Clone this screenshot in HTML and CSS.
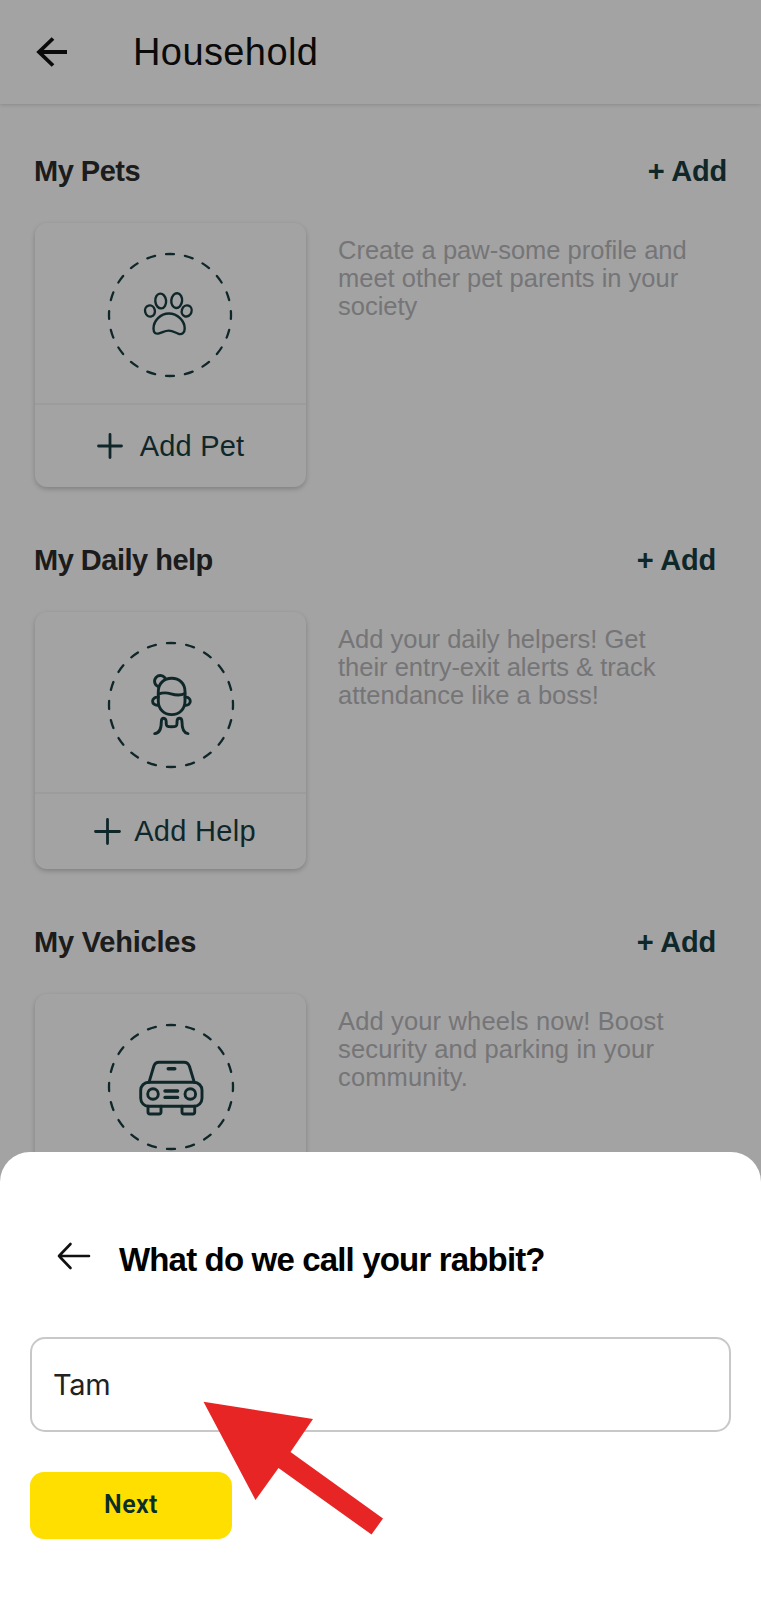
FILE: index.html
```html
<!DOCTYPE html>
<html lang="en">
<head>
    <meta charset="UTF-8">
    <meta name="viewport" content="width=device-width, initial-scale=1.0">
    <title>Household</title>
    <link rel="stylesheet" href="styles.css">
</head>
<body>

    <header>
        <svg class="back-icon" width="32" height="32" viewBox="0 0 32 32">
            <path d="M31 16H3M17 2.5L3 16L17 29.5"/>
        </svg>
        <h1>Household</h1>
    </header>

    <main>
        <section class="pets">
            <div class="section-head">
                <h2>My Pets</h2>
                <a class="add-link">+ Add</a>
            </div>
            <div class="section-body">
                <div class="card">
                    <div class="card-icon">
                        <svg width="128" height="128" viewBox="-64 -64 128 128">
                            <circle class="ring" r="61" pathLength="380"/>
                            <ellipse cx="-9.3" cy="-14" rx="5.4" ry="7.4" transform="rotate(-6 -9.3 -14)"/>
                            <ellipse cx="6.7" cy="-14.4" rx="5.4" ry="7.4" transform="rotate(6 6.7 -14.4)"/>
                            <ellipse cx="-20" cy="-4" rx="4.9" ry="5.6" transform="rotate(-15 -20 -4)"/>
                            <ellipse cx="16.7" cy="-4" rx="4.9" ry="5.6" transform="rotate(20 16.7 -4)"/>
                            <path d="M-1.2 -1.5C-9.5 -1.5 -16.5 6 -16.5 13.5C-16.5 17.5 -14.5 19.3 -11 18.4C-7.5 17.5 -5 15.6 -1.2 15.6C2.6 15.6 5 17.5 8.6 18.8C12 20 14.7 17.5 14.7 13.5C14.7 6 7.5 -1.5 -1.2 -1.5Z"/>
                        </svg>
                    </div>
                    <div class="card-action">
                        <svg width="26" height="26" viewBox="0 0 26 26"><path d="M13 1.5V24.5M1.5 13H24.5"/></svg>
                        <span>Add Pet</span>
                    </div>
                </div>
                <p>Create a paw-some profile and<br>meet other pet parents in your<br>society</p>
            </div>
        </section>

        <section class="help">
            <div class="section-head">
                <h2>My Daily help</h2>
                <a class="add-link">+ Add</a>
            </div>
            <div class="section-body">
                <div class="card">
                    <div class="card-icon">
                        <svg class="bold" width="128" height="128" viewBox="-64 -64 128 128">
                            <circle class="ring" r="62" pathLength="380"/>
                            <path d="M-13 -18.5A5.7 5.7 0 1 1 -5.5 -26"/>
                            <path d="M-12.7 -13.5C-12.7 -21.5 -7 -26.7 0.7 -26.7C8.3 -26.7 14 -21.5 14 -13.5V-4C14 4.5 8 9.6 0.7 9.6C-6.7 9.6 -12.7 4.5 -12.7 -4Z"/>
                            <path d="M-12.7 -10.8C-8 -12.8 -4.5 -12.5 0 -11.2C4.5 -9.8 9 -9 14 -11.5"/>
                            <path d="M-12.7 -7.8C-20.3 -8.5 -20.3 1 -12.7 0.3M14 -7.8C21 -8.5 21 1 14 0.3"/>
                            <path d="M-16.3 28.6C-11 28.2 -9.7 22 -9.7 17C-9.7 12 -4.8 12 -4.8 17V18.5C-4.8 21.5 -3.5 21.8 0.5 21.8C4.5 21.8 6 21.5 6 18.5V17C6 12 11 12 11 17C11 22.5 12.5 28.2 17 28.6"/>
                        </svg>
                    </div>
                    <div class="card-action">
                        <svg width="27" height="27" viewBox="0 0 27 27"><path d="M13.5 1.5V25.5M1.5 13.5H25.5"/></svg>
                        <span>Add Help</span>
                    </div>
                </div>
                <p>Add your daily helpers! Get<br>their entry-exit alerts &amp; track<br>attendance like a boss!</p>
            </div>
        </section>

        <section class="vehicles">
            <div class="section-head">
                <h2>My Vehicles</h2>
                <a class="add-link">+ Add</a>
            </div>
            <div class="section-body">
                <div class="card">
                    <div class="card-icon">
                        <svg class="bold" width="128" height="128" viewBox="-64 -64 128 128">
                            <circle class="ring" r="62" pathLength="380"/>
                            <rect x="-30.3" y="-4.7" width="61.3" height="24" rx="8"/>
                            <path d="M-22 -4.7L-17.3 -20.5Q-16 -24.7 -12 -24.7H13Q17 -24.7 18.5 -20.5L23.3 -4.7"/>
                            <circle cx="-18" cy="7" r="5.3"/>
                            <circle cx="19.3" cy="7" r="5.3"/>
                            <path class="thick" d="M-2.8 -18.3H3.8M-6 4H6.6M-6 10.4H6.6"/>
                            <path d="M-23 19.3V25Q-23 27 -21 27H-12Q-10 27 -10 25V19.3M11 19.3V25Q11 27 13 27H21.7Q23.7 27 23.7 25V19.3"/>
                        </svg>
                    </div>
                    <div class="card-action">
                        <svg width="27" height="27" viewBox="0 0 27 27"><path d="M13.5 1.5V25.5M1.5 13.5H25.5"/></svg>
                        <span>Add Vehicle</span>
                    </div>
                </div>
                <p>Add your wheels now! Boost<br>security and parking in your<br>community.</p>
            </div>
        </section>
    </main>

    <div class="overlay"></div>

    <div class="sheet">
        <div class="sheet-head">
            <svg width="34" height="28" viewBox="0 0 34 28">
                <path d="M32 14H2M13.5 2L2 14L13.5 26"/>
            </svg>
            <h3>What do we call your rabbit?</h3>
        </div>
        <input type="text" value="Tam">
        <button type="button">Next</button>

        <svg class="pointer" width="182" height="136" viewBox="0 0 182 136">
            <polygon points="1.5,0.7 111,18 88.5,51 181,117.5 169.5,133.5 76.5,67 53.5,99"/>
        </svg>
    </div>

</body>
</html>
```
FILE: styles.css
```css
* {
    margin: 0;
    padding: 0;
    box-sizing: border-box;
}

body {
    position: relative;
    height: 1600px;
    overflow: hidden;
    background-color: #fff;
    color: #2c2c2c;
    font-family: "Liberation Sans", Arial, sans-serif;
}

svg {
    fill: none;
    stroke: #193d42;
    stroke-width: 2.4;
    stroke-linecap: round;
    stroke-linejoin: round;
    flex-shrink: 0;
}

header {
    display: flex;
    align-items: center;
    height: 104px;
    padding-left: 36px;
    box-shadow: 0 1px 4px rgba(0, 0, 0, 0.16);
}

.back-icon {
    stroke: #101010;
    stroke-width: 3.8;
    stroke-linecap: butt;
    stroke-linejoin: miter;
}

h1 {
    margin-left: 65px;
    padding-top: 1px;
    font-size: 38px;
    font-weight: normal;
    letter-spacing: 0.4px;
    color: #101010;
}

main {
    padding: 49px 0 0 34px;
}

section {
    margin-bottom: 55px;
}

.section-head {
    display: flex;
    justify-content: space-between;
    height: 36px;
    padding-right: 45px;
    margin-bottom: 34px;
    line-height: 36px;
}

.pets .section-head {
    padding-right: 34px;
}

h2, .add-link {
    font-size: 29px;
    font-weight: bold;
    letter-spacing: -0.5px;
}

.vehicles h2 {
    letter-spacing: -0.2px;
}

.add-link {
    letter-spacing: -0.2px;
    color: #193d42;
}

.section-body {
    display: flex;
    align-items: flex-start;
}

.card {
    width: 271px;
    margin-left: 1px;
    border-radius: 12px;
    box-shadow: 0 2px 5px rgba(0, 0, 0, 0.22);
}

.card-icon {
    display: flex;
    align-items: center;
    justify-content: center;
    height: 182px;
    padding-top: 4px;
    padding-right: 1px;
    border-bottom: 2px solid #f4f4f4;
}

.card-action {
    display: flex;
    align-items: center;
    justify-content: center;
    gap: 17px;
    height: 82px;
    font-size: 29px;
    letter-spacing: 0.2px;
    color: #193d42;
}

.card-action svg {
    stroke-width: 2.8;
}

.help .card-icon, .vehicles .card-icon {
    height: 182px;
    padding-top: 6px;
    padding-right: 0;
}

.help .card-action, .vehicles .card-action {
    gap: 13px;
    height: 75px;
    padding-left: 9px;
    letter-spacing: 0.3px;
}

.ring {
    stroke-width: 2.3;
    stroke-dasharray: 8 11;
    stroke-dashoffset: 4;
}

.bold {
    stroke-width: 2.9;
}

.thick {
    stroke-width: 3.4;
}

.section-body p {
    margin-left: 32px;
    padding-top: 13px;
    font-size: 25.5px;
    line-height: 28.2px;
    color: #b7b7bb;
}

.vehicles p {
    letter-spacing: 0.15px;
}

.overlay {
    position: absolute;
    inset: 0;
    background-color: rgba(0, 0, 0, 0.36);
}

.sheet {
    position: absolute;
    left: 0;
    right: 0;
    bottom: 0;
    height: 448px;
    padding: 83px 30px 0;
    background-color: #fff;
    border-radius: 30px 30px 0 0;
}

.sheet-head {
    display: flex;
    align-items: flex-start;
    padding-left: 27px;
    margin-bottom: 56px;
}

.sheet-head svg {
    margin-top: 7px;
    stroke: #111;
    stroke-width: 2.6;
}

h3 {
    height: 46px;
    margin-left: 28px;
    line-height: 50px;
    font-size: 33px;
    letter-spacing: -0.84px;
    color: #000;
}

input {
    display: block;
    width: 701px;
    height: 95px;
    padding: 0 21px;
    border: 2px solid #c8c8c8;
    border-radius: 15px;
    font-family: Inter, sans-serif;
    font-size: 29px;
    letter-spacing: -0.3px;
    color: #222;
    background-color: #fff;
}

button {
    width: 202px;
    height: 67px;
    margin-top: 40px;
    padding-bottom: 2px;
    border: none;
    border-radius: 14px;
    background-color: #ffdf00;
    font-family: Roboto, sans-serif;
    font-size: 25px;
    font-weight: 600;
    letter-spacing: 0.4px;
    color: #0a2e2a;
}

/* red arrow pointing at the name field */
.pointer {
    position: absolute;
    left: 202px;
    top: 249px;
    stroke: none;
    fill: #e82525;
}
```
